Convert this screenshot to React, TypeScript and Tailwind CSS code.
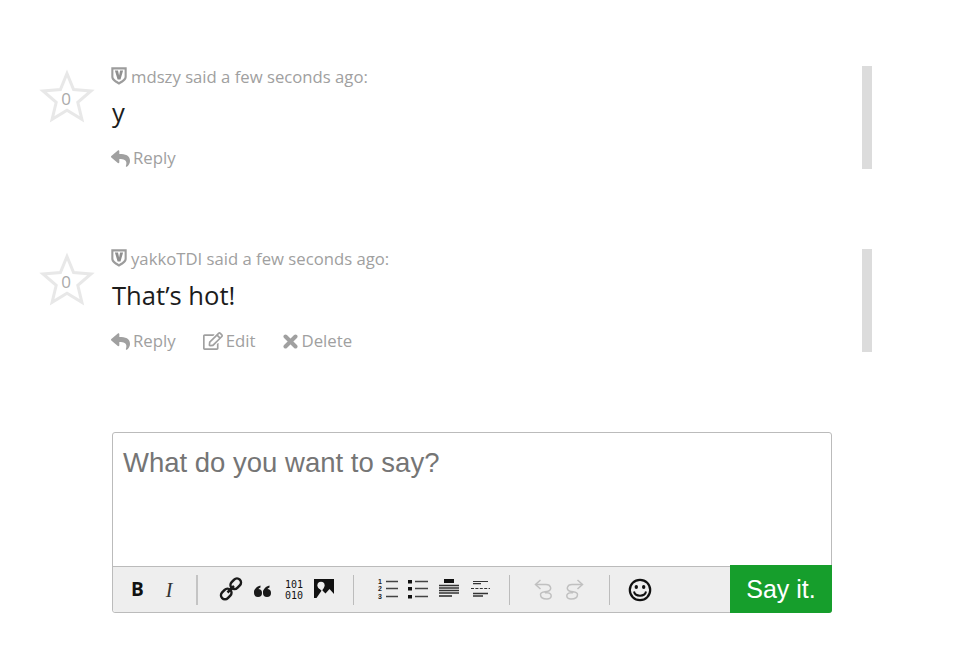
import React from "react";
import { FaReply, FaRegEdit } from "react-icons/fa";

const Star = () => (
  <svg width="56" height="56" viewBox="0 0 56 56" className="absolute left-0 top-0">
    <path d="M28 4.5 L34.6 20.6 L52 22 L38.8 33.4 L42.9 50.4 L28 41.3 L13.1 50.4 L17.2 33.4 L4 22 L21.4 20.6 Z" fill="none" stroke="#e8e8e8" strokeWidth="3" strokeLinejoin="miter" />
  </svg>
);

const Shield = () => (
  <svg width="16" height="18" viewBox="0 0 16 18" className="shrink-0">
    <path d="M0.3 0.3 H15.7 V10 C15.7 13.5 11 16 8 17.8 C5 16 0.3 13.5 0.3 10 Z" fill="#9c9c9c" />
    <path d="M2.4 2.4 H13.6 V9.6 C13.6 12 10 14 8 15.2 C6 14 2.4 12 2.4 9.6 Z" fill="#fff" />
    <path d="M3.9 3.4 H7 L8.1 8.4 L9.1 3.4 H12.1 L9.5 12.6 H6.6 Z" fill="#8f8f8f" />
  </svg>
);

const BoldX = () => (
  <svg width="15" height="15" viewBox="0 0 15 15">
    <path d="M2.5 2.5 L12.5 12.5 M12.5 2.5 L2.5 12.5" stroke="#a0a0a0" strokeWidth="4" strokeLinecap="round" />
  </svg>
);

const Action = ({ icon, label, gap }: { icon: React.ReactNode; label: string; gap: string }) => (
  <span className={`flex items-center ${gap}`}>
    {icon}
    <span>{label}</span>
  </span>
);

const Comment = ({ user, body, own, second }: { user: string; body: string; own?: boolean; second?: boolean }) => (
  <div className="flex h-[103px]">
    <div className="relative w-[72px] shrink-0 h-[56px] mt-[3px]">
      <Star />
      <span className="absolute left-0 top-[19px] w-[54px] text-center text-[17px] leading-[22px] text-[#aaaaaa]">0</span>
    </div>
    <div className="flex-1">
      <div className={`flex items-center gap-[4px] h-[22px] text-[16.7px] text-[#a0a0a0] ${second ? "-mt-px" : ""}`}>
        <span className="-mt-[2px] flex"><Shield /></span>
        <span>{user} said a few seconds ago:</span>
      </div>
      <div className={`${second ? "mt-[11px]" : "mt-[10px]"} ml-px h-[30px] text-[25.6px] leading-[30px] text-[#1c1c1c]`}>{body}</div>
      <div className="mt-[19px] flex items-center gap-[27px] h-[22px] text-[16.8px] text-[#a0a0a0]">
        <Action icon={<FaReply size={19} />} label="Reply" gap="gap-[3px]" />
        {own && <Action icon={<FaRegEdit size={20} />} label="Edit" gap="gap-[3px]" />}
        {own && <Action icon={<BoldX />} label="Delete" gap="gap-[4px]" />}
      </div>
    </div>
    <div className="w-[10px] h-[103px] bg-[#dcdcdc] ml-[30px] shrink-0" />
  </div>
);

const Sep = ({ thick }: { thick?: boolean }) => (
  <span className={`block h-[30px] shrink-0 ${thick ? "w-[2px] bg-[#c4c4c4]" : "w-px bg-[#bcbcbc]"}`} />
);

const I = ({ children, w = 22 }: { children: React.ReactNode; w?: number }) => (
  <svg width={w} height="24" viewBox={`0 0 ${w} 24`} className="block shrink-0">{children}</svg>
);

const Link = () => (
  <I w={26}>
    <g fill="none" stroke="#1a1a1a" strokeWidth="2.5">
      <rect x="13" y="2.8" width="11.5" height="8" rx="4" transform="rotate(-45 18.7 6.8)" />
      <rect x="3.5" y="13" width="11.5" height="8" rx="4" transform="rotate(-45 9.2 17)" />
      <path d="M10.5 15.5 L17 9" />
    </g>
  </I>
);

const Quote = () => (
  <I w={20}>
    <circle cx="6" cy="15" r="4" fill="#1a1a1a" />
    <path d="M2 15 C2 11 4.5 8.5 8.5 7.5 L8.5 9.5 C6.5 10.2 5.5 12 5.5 14 Z" fill="#1a1a1a" />
    <circle cx="15" cy="15" r="4" fill="#1a1a1a" />
    <path d="M11 15 C11 11 13.5 8.5 17.5 7.5 L17.5 9.5 C15.5 10.2 14.5 12 14.5 14 Z" fill="#1a1a1a" />
  </I>
);

const Img = () => (
  <I>
    <path d="M1 1 H21 V16 L16.5 11 L12.5 15.5 L9 12 L3.5 20 H1 Z" fill="#111" />
    <circle cx="8" cy="7.3" r="3.6" fill="#eeeeee" />
    <path d="M5.2 9.5 L8.8 13 L11 9.5 Z" fill="#eeeeee" />
  </I>
);

const OL = () => (
  <I>
    <g fontFamily="'Liberation Sans',sans-serif" fontWeight="700" fontSize="7" fill="#222">
      <text x="2" y="6">1</text>
      <text x="2" y="13">2</text>
      <text x="2" y="21">3</text>
    </g>
    <path d="M10 3.5 H23 M10 10.5 H23 M10 18.5 H23" stroke="#444" strokeWidth="1.5" />
  </I>
);
const UL = () => (
  <I w={24}>
    <rect x="3" y="2" width="4" height="3.5" fill="#111" />
    <rect x="3" y="9" width="4" height="3.5" fill="#111" />
    <rect x="3" y="17" width="4" height="3.5" fill="#111" />
    <path d="M10 3.5 H23 M10 10.5 H23 M10 18.5 H23" stroke="#444" strokeWidth="1.5" />
  </I>
);
const H = () => (
  <I w={23}>
    <rect x="7" y="1" width="10" height="4" fill="#111" />
    <path d="M2 7.5 H22 M2 10 H22 M2 12.5 H22 M2 15 H22" stroke="#333" strokeWidth="1.3" />
    <path d="M2 18 H15" stroke="#333" strokeWidth="1.6" />
  </I>
);
const HR = () => (
  <I>
    <path d="M3 3.5 H18 M3 5.7 H11" stroke="#333" strokeWidth="1.2" />
    <path d="M1 10.5 H20" stroke="#333" strokeWidth="1.2" strokeDasharray="3 1.4" />
    <path d="M3 15.5 H18 M3 18 H13" stroke="#333" strokeWidth="1.3" />
  </I>
);
const Undo = ({ flip }: { flip?: boolean }) => (
  <span className={flip ? "-scale-x-100 block" : "block"}>
    <I>
      <g fill="none" stroke="#c0c0c0" strokeWidth="1.5">
        <path d="M7.5 2 L2.5 6.5 L7.5 11" />
        <path d="M3 6.5 H13 C18 6.5 19.5 12 15 13.2 C11 14.2 7.5 13.8 7.5 16.5 C7.5 20 11 21 14 21 C19 21 20 15.5 14.5 14.8 H12" />
      </g>
    </I>
  </span>
);
const Smile = () => (
  <I w={24}>
    <circle cx="12" cy="12" r="10.2" fill="none" stroke="#111" strokeWidth="2.2" />
    <ellipse cx="8.3" cy="9" rx="1.7" ry="2.1" fill="#111" />
    <ellipse cx="15.7" cy="9" rx="1.7" ry="2.1" fill="#111" />
    <path d="M6 13.5 C7 19 17 19 18 13.5" fill="none" stroke="#111" strokeWidth="2" />
  </I>
);

export default function App() {
  return (
    <div className="w-[956px] h-[661px] bg-white overflow-hidden pt-[66px] pl-[39px] font-['Open_Sans','Liberation_Sans',sans-serif]">
      <div className="w-[833px] flex flex-col gap-[80px]">
        <Comment user="mdszy" body="y" />
        <Comment user="yakkoTDI" body="That’s hot!" own second />
      </div>
      <div className="ml-[73px] mt-[80px] w-[720px] h-[181px] rounded-[3px] border border-[#bbbbbb] flex flex-col relative font-['Liberation_Sans',sans-serif]">
        <div className="flex-1 px-[10px] pt-[12px] text-[27.5px] leading-[36px] text-[#757575]">What do you want to say?</div>
        <div className="h-[46px] border-t border-[#bbbbbb] bg-[#eeeeee] rounded-b-[3px] flex items-center">
          <div className="flex items-center flex-1 pl-[16px]">
            <span className="w-[17px] text-center font-['Open_Sans',sans-serif] font-bold text-[19px] text-[#111]">B</span>
            <span className="ml-[17px] w-[12px] text-center font-['Liberation_Serif',serif] italic text-[20px] text-[#333]">I</span>
            <span className="ml-[21px]"><Sep thick /></span>
            <span className="ml-[19px] -mt-[1px]"><Link /></span>
            <span className="ml-[9px]"><Quote /></span>
            <span className="ml-[11px] w-[22px] text-center font-['DejaVu_Sans_Mono',monospace] text-[10px] leading-[11px] text-[#111]">101<br />010</span>
            <span className="ml-[8px]"><Img /></span>
            <span className="ml-[18px]"><Sep /></span>
            <span className="ml-[22px]"><OL /></span>
            <span className="ml-[7px]"><UL /></span>
            <span className="ml-[8px]"><H /></span>
            <span className="ml-[10px]"><HR /></span>
            <span className="ml-[17px]"><Sep /></span>
            <span className="ml-[23px]"><Undo /></span>
            <span className="ml-[8px]"><Undo flip /></span>
            <span className="ml-[24px]"><Sep /></span>
            <span className="ml-[18px]"><Smile /></span>
          </div>
          <div className="-mt-[2px] -mr-px h-[48px] w-[102px] pt-[2px] bg-[#169e2c] rounded-br-[3px] text-white text-[25px] flex items-center justify-center">Say it.</div>
        </div>
      </div>
    </div>
  );
}
